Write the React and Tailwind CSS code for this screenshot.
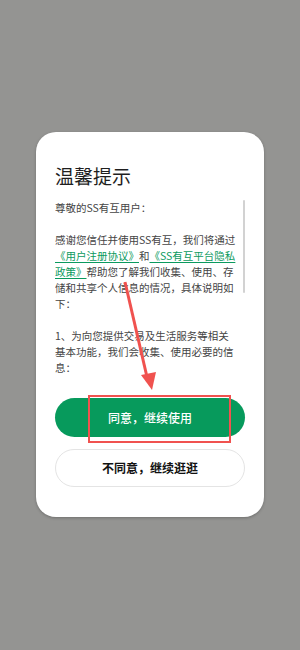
import React from 'react';

const cjk = { fontFamily: '"Noto Sans CJK SC", "Noto Sans", sans-serif' };

function Link({ children }) {
  return <span className="text-[#0b9a5e] underline underline-offset-2">{children}</span>;
}

export default function App() {
  return (
    <div style={cjk} className="relative w-[300px] h-[650px] bg-[#949492] pt-[132px] overflow-hidden">
      <div className="mx-auto w-[228px] h-[385px] bg-white rounded-[20px] shadow-[0_1px_3px_rgba(0,0,0,0.25)] px-[19px] pt-[30px] flex flex-col">
        <h1 className="text-[19px] leading-[28px] text-[#1f1f1f] font-normal">温馨提示</h1>

        {/* scrollable agreement text */}
        <div className="mt-[10px] h-[178px] flex gap-[2px] overflow-hidden">
          <div className="flex-1 text-[10.5px] leading-[16px] text-[#444] whitespace-nowrap">
            <p>尊敬的SS有互用户：</p>
            <p className="h-[16px]"></p>
            <p>感谢您信任并使用SS有互，我们将通过</p>
            <p><Link>《用户注册协议》</Link>和<Link>《SS有互平台隐私</Link></p>
            <p><Link>政策》</Link>帮助您了解我们收集、使用、存</p>
            <p>储和共享个人信息的情况，具体说明如</p>
            <p>下：</p>
            <p className="h-[16px]"></p>
            <p>1、为向您提供交易及生活服务等相关</p>
            <p>基本功能，我们会收集、使用必要的信</p>
            <p>息：</p>
          </div>
          <div className="w-[2px] h-[93px] bg-[#d2d2d2] rounded-full"></div>
        </div>

        <button className="mt-[20px] h-[39px] w-full rounded-full bg-[#079a5c] text-white text-[12px] font-medium">
          同意，继续使用
        </button>
        <button className="mt-[12px] h-[38px] w-full rounded-full bg-white border border-[#e4e4e4] text-[#111] text-[12px] font-bold">
          不同意，继续逛逛
        </button>
      </div>

      {/* annotation overlay */}
      <div className="absolute left-[88px] top-[395px] w-[143px] h-[48px] border-2 border-[#f0524f]"></div>
      <svg className="absolute left-0 top-0" width="300" height="650" viewBox="0 0 300 650">
        <line x1="125" y1="282" x2="147" y2="377" stroke="#f0524f" strokeWidth="3" />
        <polygon points="141,375 156,372 152,390" fill="#f0524f" />
      </svg>
    </div>
  );
}
